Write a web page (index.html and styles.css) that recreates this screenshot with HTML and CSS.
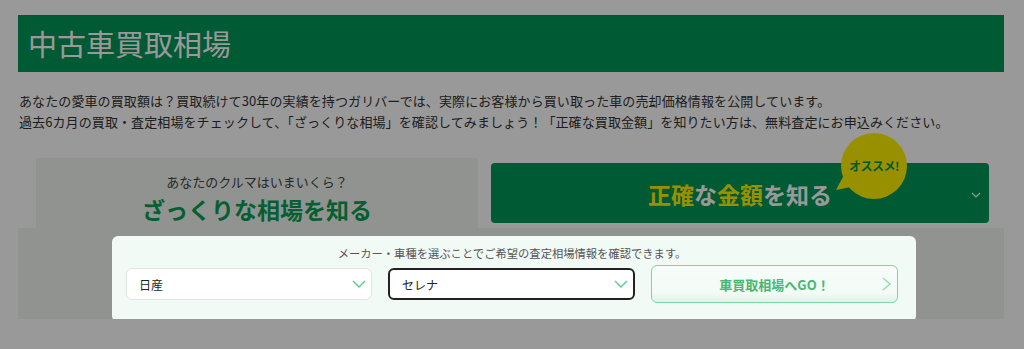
FILE: index.html
```html
<!DOCTYPE html>
<html lang="ja">
<head>
    <meta charset="UTF-8">
    <meta name="viewport" content="width=device-width, initial-scale=1.0">
    <title>中古車買取相場</title>
    <link rel="stylesheet" href="styles.css">
</head>
<body>

<div class="page">
    <h1 class="title">中古車買取相場</h1>
    <p class="lead">
        あなたの愛車の買取額は？買取続けて30年の実績を持つガリバーでは、実際にお客様から買い取った車の売却価格情報を公開しています。<br>
        過去6カ月の買取・査定相場をチェックして、「ざっくりな相場」を確認してみましょう！「正確な買取金額」を知りたい方は、無料査定にお申込みください。
    </p>

    <div class="tabs">
        <div class="tab tab-active">
            <div class="tab-sub">あなたのクルマはいまいくら？</div>
            <div class="tab-main">ざっくりな相場を知る</div>
        </div>
        <div class="tab tab-green">
            <div class="tab-main"><em>正確</em>な<em>金額</em>を知る</div>
            <svg class="tab-arrow" width="10" height="6" viewBox="0 0 10 6">
                <path d="M1 1 L5 5 L9 1" fill="none" stroke="#fff" stroke-width="1.2"/>
            </svg>
            <div class="badge">オススメ!</div>
        </div>
    </div>

    <div class="panel">
        <div class="search">
            <p class="search-note">メーカー・車種を選ぶことでご希望の査定相場情報を確認できます。</p>
            <div class="search-row">
                <div class="select">
                    <span>日産</span>
                    <svg width="14" height="8" viewBox="0 0 14 8">
                        <path d="M1 1 L7 7 L13 1" fill="none" stroke="#5ccb8f" stroke-width="1.4"/>
                    </svg>
                </div>
                <div class="select select-focus">
                    <span>セレナ</span>
                    <svg width="14" height="8" viewBox="0 0 14 8">
                        <path d="M1 1 L7 7 L13 1" fill="none" stroke="#5ccb8f" stroke-width="1.4"/>
                    </svg>
                </div>
                <button class="go-btn">
                    車買取相場へGO！
                    <svg class="go-arrow" width="9" height="14" viewBox="0 0 9 14">
                        <path d="M1 1 L8 7 L1 13" fill="none" stroke="#8ddcad" stroke-width="1.3"/>
                    </svg>
                </button>
            </div>
        </div>
    </div>
</div>

<div class="overlay"></div>

</body>
</html>
```

FILE: styles.css
```css
body {
    margin: 0;
    background-color: #fff;
    font-family: "Noto Sans CJK JP", "Noto Sans", sans-serif;
    color: #333;
}

.page {
    padding: 15px 20px 0 18px;
}

.title {
    margin: 0;
    height: 57px;
    line-height: 57px;
    padding-left: 10px;
    background-color: #009656;
    color: #fff;
    font-size: 29px;
    font-weight: normal;
}

.lead {
    margin: 18px 0 0 1px;
    font-size: 13px;
    line-height: 21px;
    letter-spacing: 0.1px;
    color: #333;
}

/* tabs */
.tabs {
    display: flex;
    align-items: center;
    gap: 13px;
    margin-top: 26px;
    padding: 0 15px 0 18px;
}

.tab {
    box-sizing: border-box;
    text-align: center;
}

.tab-active {
    width: 442px;
    height: 70px;
    padding-top: 14px;
    background-color: #f0f5f0;
}

.tab-sub {
    font-size: 13px;
    line-height: 19px;
    color: #444;
}

.tab-active .tab-main {
    margin-top: 3px;
    font-size: 23px;
    line-height: 30px;
    font-weight: bold;
    color: #0a9e55;
}

.tab-green {
    position: relative;
    flex: 1;
    height: 60px;
    display: flex;
    align-items: center;
    justify-content: center;
    background-color: #009656;
    border-radius: 4px;
}

.tab-green .tab-main {
    font-size: 23px;
    font-weight: bold;
    color: #fff;
    line-height: 30px;
    margin-top: 2px;
}

.tab-green em {
    font-style: normal;
    color: #fff100;
}

.tab-arrow {
    position: absolute;
    right: 8px;
    top: 29px;
}

.badge {
    position: absolute;
    left: 350px;
    top: -30px;
    width: 66px;
    height: 66px;
    border-radius: 50%;
    background-color: #fff100;
    color: #009656;
    font-size: 12px;
    font-weight: bold;
    line-height: 66px;
    text-align: center;
    letter-spacing: -0.5px;
}

.badge::after {
    content: "";
    position: absolute;
    left: -5px;
    top: 40px;
    width: 20px;
    height: 17px;
    background-color: #fff100;
    clip-path: polygon(0 17px, 9px 0, 20px 13px);
}

/* search panel */
.panel {
    height: 91px;
    padding-top: 8px;
    box-sizing: border-box;
    background-color: #f0f5f0;
}

.search {
    position: relative;
    z-index: 20;
    box-sizing: border-box;
    width: 804px;
    height: 86px;
    margin-left: 94px;
    padding: 9px 18px 0 14px;
    background-color: #f1faf5;
    border-radius: 6px;
}

.search-note {
    margin: 0;
    font-size: 11.3px;
    line-height: 16px;
    color: #555;
    text-align: center;
}

.search-row {
    display: grid;
    grid-template-columns: 246px 247px 247px;
    gap: 16px;
    align-items: center;
    margin-top: 4px;
    height: 38px;
}

.select {
    box-sizing: border-box;
    height: 32px;
    display: flex;
    align-items: center;
    justify-content: space-between;
    padding: 0 5px 0 12px;
    background-color: #fff;
    border: 1px solid #e2e6e3;
    border-radius: 6px;
    font-size: 12px;
    color: #222;
}

.select-focus {
    border: 2px solid #222;
    padding-left: 12px;
}

.go-btn {
    position: relative;
    box-sizing: border-box;
    height: 38px;
    border: 1.5px solid #7dd6a0;
    border-radius: 6px;
    background: linear-gradient(to bottom, #f7fdfa 0%, #f2fbf6 75%, #e4f0e9 100%);
    font-family: inherit;
    font-size: 13px;
    font-weight: bold;
    color: #46b874;
    cursor: pointer;
}

.go-arrow {
    position: absolute;
    right: 6px;
    top: 11px;
}

.overlay {
    position: fixed;
    inset: 0;
    z-index: 10;
    background-color: rgba(0, 0, 0, 0.4);
}
```
